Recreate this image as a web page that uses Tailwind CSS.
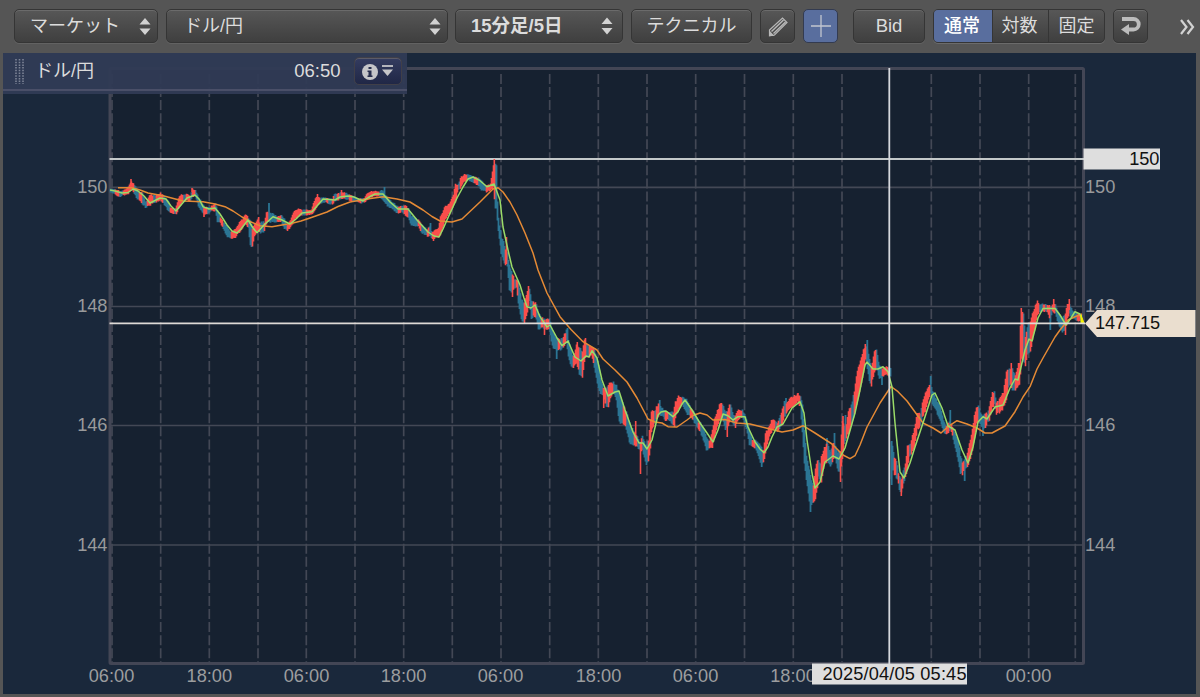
<!DOCTYPE html>
<html lang="ja">
<head>
  <meta charset="UTF-8">
  <meta name="viewport" content="width=device-width, initial-scale=1.0">
  <title>ドル/円 チャート</title>
  <script src="https://cdn.jsdelivr.net/npm/@tailwindcss/browser@4"></script>
</head>
<body class="w-[1200px] h-[697px] overflow-hidden bg-[#555555] font-['Liberation_Sans','Noto_Sans_CJK_JP',sans-serif] text-[#dcdcdc] flex flex-col">
  <!-- toolbar -->
  <header class="h-[53px] shrink-0 flex items-start pt-[9px] pl-[14px] text-[18px] leading-none whitespace-nowrap">
    <button class="w-[144px] h-[34px] rounded-[5px] border border-[#353535] bg-linear-to-b from-[#575757] to-[#3f3f3f] shadow-[inset_0_1px_0_#6b6b6b,0_1px_0_#626262] flex items-center justify-between pl-[15px] pr-[6px]">
      <span>マーケット</span>
      <svg class="w-[12px] h-[18px]" viewBox="0 0 12 18"><path d="M.5 7.500L6 1l5.500 6.500zM.5 11.500h11L6 18z" fill="#d2d2d2"/></svg>
    </button>
    <button class="ml-2 w-[282px] h-[34px] rounded-[5px] border border-[#353535] bg-linear-to-b from-[#575757] to-[#3f3f3f] shadow-[inset_0_1px_0_#6b6b6b,0_1px_0_#626262] flex items-center justify-between pl-[17px] pr-[6px]">
      <span>ドル/円</span>
      <svg class="w-[12px] h-[18px]" viewBox="0 0 12 18"><path d="M.5 7.500L6 1l5.500 6.500zM.5 11.500h11L6 18z" fill="#d2d2d2"/></svg>
    </button>
    <button class="ml-[7px] w-[168px] h-[34px] rounded-[5px] border border-[#353535] bg-linear-to-b from-[#575757] to-[#3f3f3f] shadow-[inset_0_1px_0_#6b6b6b,0_1px_0_#626262] flex items-center justify-between pl-[15px] pr-[9px] font-bold text-[18.5px]">
      <span>15分足/5日</span>
      <svg class="w-[12px] h-[18px]" viewBox="0 0 12 18"><path d="M.5 7L6 .5 11.500 7zM.5 11h11L6 17.500z" fill="#d2d2d2"/></svg>
    </button>
    <button class="ml-2 w-[121px] h-[34px] rounded-[5px] border border-[#353535] bg-linear-to-b from-[#575757] to-[#3f3f3f] shadow-[inset_0_1px_0_#6b6b6b,0_1px_0_#626262]">テクニカル</button>
    <button class="ml-2 w-[35px] h-[34px] rounded-[5px] border border-[#353535] bg-linear-to-b from-[#575757] to-[#3f3f3f] shadow-[inset_0_1px_0_#6b6b6b,0_1px_0_#626262] flex items-center justify-center">
      <svg class="w-[20px] h-[20px] mt-[2px]" viewBox="0 0 20 20" fill="none" stroke="#b8b8b8">
        <path d="M1.500 13L14.500 1l4.500 4.500L6.500 18l-5 .7z" stroke-width="1.200"/>
        <path d="M3.500 14.500L15.500 3M5.500 16.500L17.500 5" stroke-width="1.500"/>
        <path d="M1 13v6h5.500z" fill="#b8b8b8" stroke="none"/>
      </svg>
    </button>
    <button class="ml-2 w-[35px] h-[34px] rounded-[5px] border border-[#333b50] bg-[#596e9e] flex items-center justify-center">
      <svg class="w-[20px] h-[22px]" viewBox="0 0 20 22"><path d="M0 11h20M10 0v22" stroke="#c2c6d0" stroke-width="1.300"/></svg>
    </button>
    <button class="ml-[15px] w-[72px] h-[34px] rounded-[5px] border border-[#353535] bg-linear-to-b from-[#575757] to-[#3f3f3f] shadow-[inset_0_1px_0_#6b6b6b,0_1px_0_#626262] text-[18.5px]">Bid</button>
    <div class="ml-2 w-[172px] h-[34px] rounded-[5px] border border-[#353535] bg-linear-to-b from-[#575757] to-[#3f3f3f] shadow-[0_1px_0_#6b6b6b] flex overflow-hidden">
      <button class="w-[58px] bg-[#596e9e] text-white font-medium pr-[2px]">通常</button>
      <button class="w-[56px] border-l border-[#353535] pr-[2px]">対数</button>
      <button class="flex-1 border-l border-[#353535]">固定</button>
    </div>
    <button class="ml-2 w-[35px] h-[34px] rounded-[5px] border border-[#353535] bg-linear-to-b from-[#575757] to-[#3f3f3f] shadow-[inset_0_1px_0_#6b6b6b,0_1px_0_#626262] flex items-center justify-center">
      <svg class="w-[20px] h-[20px]" viewBox="0 0 20 20"><path d="M1 3h11.500a5 5 0 0 1 0 10.500H7" fill="none" stroke="#bcbcbc" stroke-width="3.800"/><path d="M8 8v11L0 13.500z" fill="#bcbcbc"/></svg>
    </button>
    <svg class="ml-[32px] mt-[10px] w-[15px] h-[16px]" viewBox="0 0 15 16"><path d="M1 1l5.500 7L1 15M7.500 1L13 8l-5.500 7" fill="none" stroke="#d2d2d2" stroke-width="2.200"/></svg>
  </header>

  <main class="relative ml-[3px] w-[1192.5px] h-[641px] bg-[#1a283b]">
    <!-- the view box keeps window coordinates -->
    <svg class="block w-[1193px] h-[641px]" viewBox="3 53 1193 641" font-size="18.200">
      <rect x="110" y="68.500" width="973.500" height="595" fill="#162130"/>
      <g id="grid" stroke="#434855" stroke-width="1.700"></g>
      <rect x="110" y="68.500" width="973.500" height="595" rx="1" fill="none" stroke="#434655" stroke-width="3"/>
      <path d="M109.500 159H1084" stroke="#c3c8c9" stroke-width="1.800"/>
      <g id="candles"></g>
      <g fill="none" stroke-width="1.500" stroke-linejoin="round">
        <polyline stroke="#e58a35" points="118,187.700 132,187.700 140,190 148,193 163,195.700 183,201 203,201.700 215,204 225,206.700 233,211 242,217 251,222 260,225.700 272,226.700 282,225 293,223 301,221 310,218 327,212 338,206.500 350,202 367,199 383,196.700 397,199 410,202 423,210 432,216.500 440,221 452,222 462,219 480,202 493,189 498,187.700 503,192 510,202 517,215 525,233 533,253 538,270 547,293 560,316.700 571,329.500 583,341.700 597,350 603,359 615,370 627,382 637,398 648,419 655,422 662,423 668,426.700 677,427 687,420 693,415.500 700,413 707,415 713,420 725,419.500 737,423 750,424 770,429 782,432 793,430 803,425.700 815,433 832,444 843,455 850,458.700 855,455.700 860,445 867,427 880,403 891,386.500 898,391.700 907,401 923,423 933,428 941,433 948,426.700 957,420.700 967,424 977,428 985,433 992,433 1005,426 1015,411.700 1023,397 1030,386.700 1037,369 1043,358 1055,337 1060,330 1068,320 1075,316.700 1082,314"/>
        <polyline stroke="#9bdc68" points="110,190 115,191 122,193 128,192.500 133,189 138,191 144,196 150,203 160,198 166,199 171,206 176,211 181,205 187,198 195,195 199,199 203,206.700 209,209 215,208 220,214 227,225 232,231 237,233 241,229 248,220 253,228 257,232.700 264,225 273,216.700 282,220 290,224 296,219 302,213 312,211.700 317,206 323,199 335,200 340,197 348,196 354,197 363,201 369,197 375,194 383,194 390,202 398,209 408,209 417,220 428,232 434,236 439,237 443,229 447,220 452,209 457,198 463,187 468,179 473,177 480,180.700 487,186.700 494,184 497,192 500,200 503,227 508,250 512,267 520,285 524,298 527,306.700 531,308 535,305 540,316.700 547,327 550,325 557,338 562,345.700 568,341 575,357 581,361 586,356 589,357 592,350.700 597,358 602,380 608,396 615,392 619,391 625,410 633,432 639,443 643,443 647,449 652,440 658,415 661,412 666,411 673,416.700 678,411.700 682,404 685,400 692,410 700,423 707,433 713,442 718,430 723,414 728,415.700 733,420 738,416.700 745,416.700 748,427 755,442 760,449 764,452.700 768,447 772,437 777,427 783,424 792,408 800,401.700 804,413 807,440 812,473 815,488 820,482 825,462 833,456 839,459 845,448 855,413 860,390 865,365 867,362 873,369 878,369 883,366.700 888,371.700 892,387 895,423 900,472 904,478 910,463 915,447 923,423 932,395 935,393 942,408 948,426 955,430 962,450 968,463 973,447 978,422 983,416.700 987,419 995,407 1003,405 1010,388 1015,379 1018,380 1025,350 1029,339 1032,341 1038,318 1043,308.500 1055,308.500 1060,315 1066,325 1071,318 1075,311.700 1080,314 1082,320"/>
      </g>
      <path d="M1081 315l3 8h-3z" fill="#f4f000" stroke="#f4f000"/>
      <path d="M109.500 323.300H1085" stroke="#dedad6" stroke-width="1.700"/>
      <path d="M889.300 68V664" stroke="#d5d8dd" stroke-width="1.800"/>
      <g fill="#999a9b">
        <text x="107.500" y="193" text-anchor="end">150</text>
        <text x="107.500" y="312.200" text-anchor="end">148</text>
        <text x="107.500" y="431.200" text-anchor="end">146</text>
        <text x="107.500" y="550.700" text-anchor="end">144</text>
        <text x="1085" y="193">150</text>
        <text x="1085" y="312.200">148</text>
        <text x="1085" y="431.200">146</text>
        <text x="1085" y="550.700">144</text>
      </g>
      <g id="hours" fill="#9c9d9f" text-anchor="middle"></g>
      <rect x="1083.500" y="148.500" width="76.500" height="21" fill="#dedede"/>
      <text x="1159.500" y="165" text-anchor="end" fill="#111">150</text>
      <path d="M1085 323.500L1097 310h98.500v27H1097z" fill="#eadecf"/>
      <text x="1095" y="329.300" fill="#111" textLength="65" lengthAdjust="spacing">147.715</text>
      <rect x="812" y="663.500" width="155" height="21" fill="#dedede"/>
      <text x="822.500" y="680.300" fill="#111" textLength="144" lengthAdjust="spacing">2025/04/05 05:45</text>
    </svg>

    <!-- instrument header over the chart -->
    <div class="absolute left-0 top-0 w-[403.5px] h-[41px] bg-[#303b55]/95 text-[18px] leading-none">
      <div class="h-[36px] flex items-center pl-[12px] pr-[5px]">
        <svg class="w-[9px] h-[25px]" viewBox="0 0 9 25"><path d="M1 0v25M4.500 0v25M8 0v25" stroke="#7d8496" stroke-width="1.600" stroke-dasharray="1.500 1.200"/></svg>
        <span class="ml-[11px]">ドル/円</span>
        <span class="ml-auto mr-[13px] text-[18.5px]">06:50</span>
        <button class="w-[48px] h-[28px] rounded-[5px] border border-[#403f48] bg-linear-to-b from-[#343c60] to-[#202746] shadow-[inset_0_1px_0_#5b5b68] flex items-center justify-center gap-[4px]">
          <svg class="w-[16px] h-[16px] mt-px" viewBox="0 0 16 16"><circle cx="8" cy="8" r="8" fill="#c5c5c8"/><path d="M6.500 3h3v2h-3zM5.500 6.500h4v5h1V13h-5v-1.500h1V8h-1z" fill="#262d4c"/></svg>
          <svg class="w-[11px] h-[12px]" viewBox="0 0 11 12"><path d="M0 1h11" stroke="#c5c5c8" stroke-width="1.800"/><path d="M0 4.500h11L5.500 11z" fill="#c5c5c8"/></svg>
        </button>
      </div>
      <div class="h-[2px] bg-[#4a4f68]"></div>
    </div>
  </main>

  <script>
    const NS = 'http://www.w3.org/2000/svg';

    function addPath(parent, d, attrs) {
      const p = document.createElementNS(NS, 'path');
      p.setAttribute('d', d);
      for (const k in attrs) p.setAttribute(k, attrs[k]);
      parent.appendChild(p);
    }

    // grid
    const grid = document.getElementById('grid');
    const columns = [112, 160.7, 209.3, 258, 306.3, 355, 403.7, 452.3, 501, 549.7, 598.3, 647, 695.7, 744.5, 793.3, 842, 931.3, 980, 1028.7, 1075.3];
    columns.forEach(x => addPath(grid, `M${x} 74V662`, { 'stroke-dasharray': '10 3.05' }));
    [187.3, 306.5, 425.5, 545].forEach(y => addPath(grid, `M110 ${y}H1083`, {}));

    const hours = document.getElementById('hours');
    [[111.5, '06:00'], [209.3, '18:00'], [306.5, '06:00'], [403.5, '18:00'], [500.5, '06:00'], [598.5, '18:00'], [695.5, '06:00'], [793, '18:00'], [1028.5, '00:00']].forEach(([x, label]) => {
      const t = document.createElementNS(NS, 'text');
      t.setAttribute('x', x);
      t.setAttribute('y', 681.7);
      t.textContent = label;
      hours.appendChild(t);
    });

    // x, high, low, r = up / b = down
    const bars = `110,189,192,b 115,190,194,r 119,191,197,b 123,191,195,r 128,187,194,r 131,181,189,r 134,185,194,b 137,189,200,b 139,192,200,r 142,192,204,b 145,202,208,b 147,199,206,r 150,194,205,r 153,195,203,b 156,195,202,r 160,193,200,r 163,196,204,b 168,201,211,b 170,207,213,r 174,210,214,b 176,206,214,r 179,195,207,r 183,194,202,b 186,194,200,r 190,196,201,b 192,189,197,r 195,190,196,b 198,197,206,b 202,203,213,b 204,208,214,r 207,207,214,b 211,206,210,r 215,204,211,b 217,210,222,b 220,217,223,r 223,222,229,b 227,227,237,b 231,232,239,r 235,228,238,r 240,220,231,r 245,215,223,r 248,217,229,b 250,219,246,b 252,228,247,r 254,225,236,r 257,219,232,r 260,222,233,b 264,222,232,r 266,212,224,r 268,212,222,b 273,214,222,b 277,217,222,r 281,215,222,b 284,219,229,b 287,225,231,r 291,218,226,r 294,210,220,r 298,209,216,r 302,210,216,b 306,210,215,r
    311,210,214,r 314,200,212,r 317,196,205,r 320,198,203,b 326,198,202,r 328,198,204,b 332,199,204,r 334,194,202,b 337,193,201,r 339,193,199,b 342,192,199,r 345,193,199,b 349,195,200,r 352,196,201,b 358,199,202,r 361,199,203,b 364,198,202,r 367,193,200,r 373,191,196,r 379,192,196,b 382,190,200,b 387,198,206,b 393,203,210,b 398,207,214,r 401,206,212,b 404,205,214,r 408,208,219,b 411,216,226,b 418,220,226,r 421,224,233,b 427,229,236,r 429,227,236,b 432,232,239,r 438,228,237,r 440,216,235,r 445,206,220,r 449,203,214,r 453,194,206,r 455,183,202,r 458,184,190,b 460,178,188,r 464,173,182,r 467,174,180,b 474,177,183,r 478,178,186,b 481,181,190,b 486,186,192,r 490,184,190,r 493,165,188,r 495,164,210,b 497,200,222,b 498,218,231,b 501,237,255,b 503,240,262,b 505,250,265,r 507,252,266,b 509,265,291,b 512,274,294,r 514,279,288,b 516,280,287,r 518,283,305,b 521,298,320,b 524,303,325,r 527,290,313,r 529,289,302,b 531,300,320,b 533,302,316,r 536,303,320,b 538,312,330,b 541,317,328,r 543,318,329,b 546,319,331,r 549,318,330,b
    552,330,347,b 556,338,352,b 558,338,350,r 560,340,351,b 563,336,348,r 565,332,345,r 566,330,341,b 568,340,358,b 571,350,367,b 573,356,368,r 576,345,363,r 579,348,374,b 582,350,377,r 584,340,362,r 586,343,357,b 589,346,358,r 591,346,355,r 594,348,368,b 597,360,385,b 600,376,395,b 603,388,396,r 606,387,407,b 608,384,408,r 611,382,396,r 613,382,392,b 616,385,400,b 619,394,423,b 623,405,424,r 626,412,430,b 630,425,446,b 634,432,445,r 637,436,448,b 640,442,452,r 642,434,450,b 645,445,462,b 648,440,462,r 650,420,450,r 651,411,432,r 654,411,425,b 656,406,420,r 659,403,415,b 663,410,417,b 665,411,421,r 668,412,420,b 673,412,425,r 675,402,418,r 678,396,410,r 682,397,405,b 687,400,415,b 690,408,418,r 693,411,421,b 698,422,430,r 700,422,432,b 704,430,443,b 706,436,450,b 709,441,449,r 712,430,448,r 714,418,438,r 718,408,424,r 720,402,420,r 722,403,420,b 725,412,430,b 727,410,429,r 730,403,420,b 733,415,424,b 735,415,428,r 738,410,420,r 742,410,417,b 746,418,430,b 749,430,445,b 752,440,447,r 755,440,448,b 760,445,462,b 763,450,463,r 765,433,455,r 768,427,440,r 772,418,430,r 775,420,430,b 777,422,433,r 779,418,430,b 781,412,426,r 784,401,418,b 786,404,414,r 789,398,409,r 793,396,408,r 797,394,402,r 800,396,407,b 802,405,432,b 804,430,465,b 806,455,480,b 809,470,502,b 811,480,506,b 813,485,502,r 815,468,501,r 817,460,488,r 818,460,477,b 820,464,480,b 821,455,482,r 824,447,464,r 827,443,462,b 830,452,467,b 832,443,463,r 834,443,456,b 837,452,470,b 840,450,475,r 842,420,460,r 844,425,445,b 846,424,438,r 848,410,434,r 851,405,425,b 854,390,415,r 857,370,400,r 861,356,385,r
    863,350,372,r 865,345,360,r 866,345,362,b 869,358,382,b 871,366,386,r 874,351,372,r 876,350,368,b 879,365,380,b 882,368,377,r 886,366,374,r 888,367,376,b 891,442,480,b 892,445,467,b 894,458,475,r 896,460,478,b 898,472,484,r 899,475,491,b 901,478,494,r 903,470,484,b 905,463,478,r 907,446,470,r 909,445,456,b 911,440,456,r 914,427,446,r 917,412,430,r 920,414,426,b 922,403,417,r 925,392,412,r 928,386,400,r 930,384,393,b 932,390,405,b 936,399,412,b 940,405,421,b 943,420,432,b 946,426,435,r 949,420,431,b 951,424,432,r 953,429,440,b 958,440,462,b 960,455,474,b 962,462,475,r 964,458,470,b 967,453,468,r 970,438,460,r 972,428,450,r 974,415,438,r 976,406,425,r 978,406,422,b 982,416,429,b 985,412,428,r 987,414,422,b 989,406,420,r 992,392,408,r 994,391,405,b 996,403,414,r 998,400,412,b 999,397,415,r 1003,392,408,r 1006,370,400,r 1008,369,388,b 1010,368,386,r 1012,368,390,b 1015,375,392,r 1018,362,386,r 1020,325,375,r 1021,310,360,r 1023,313,362,b 1025,336,366,r 1027,326,355,b 1030,320,352,r 1033,310,335,r 1035,305,325,r 1037,301,315,r 1039,304,312,b 1043,304,312,r 1045,304,311,b 1047,305,312,r 1050,306,322,b 1052,304,311,r 1055,305,314,b 1058,312,325,b 1062,318,332,b 1065,312,332,r 1067,303,318,r 1069,303,315,b 1073,312,318,b 1077,314,321,r 1080,314,321,b 1082,316,321,b`
      .split(/\s+/).map(s => { const [x, hi, lo, c] = s.split(','); return [+x, +hi, +lo, c]; });

    // one candle per pixel, long wicks listed on their own
    let up = '', down = '', seed = 7;
    const rand = () => (seed = (seed * 1103515245 + 12345) % 2147483648) / 2147483648;
    for (let i = 0; i < bars.length - 1; i++) {
      const [x0, h0, l0, c] = bars[i];
      const [x1, h1, l1] = bars[i + 1];
      const jump = Math.abs(h1 - h0) > 30;
      for (let x = x0; x < x1; x++) {
        const t = jump ? 0 : (x - x0) / (x1 - x0);
        const j = Math.min(2.5, (l0 - h0) / 5);
        const hi = h0 + (h1 - h0) * t - 0.7 + rand() * j;
        const lo = l0 + (l1 - l0) * t + 0.7 - rand() * j;
        const d = `M${x + 0.5} ${hi.toFixed(1)}V${lo.toFixed(1)}`;
        if (c === 'r') up += d; else down += d;
      }
    }
    const wicks = [[131, 179, 188, 'r'], [192, 188, 192, 'r'], [204, 208, 217, 'r'], [258.7, 217, 230, 'r'], [269, 203, 220, 'b'], [317.5, 194, 205, 'r'], [341.5, 190, 199, 'r'], [384.5, 187, 200, 'b'], [430.5, 223, 236, 'b'], [433.5, 232, 241, 'r'], [494.3, 159, 186, 'r'], [506.5, 237, 255, 'r'], [512.5, 275, 297, 'r'], [528.5, 286, 300, 'r'], [544.5, 320, 335, 'r'], [556.7, 340, 359, 'b'], [567.5, 328, 340, 'b'], [577.3, 342, 362, 'r'], [585.5, 338, 355, 'r'], [603.7, 390, 408, 'r'], [635.7, 421, 440, 'r'], [640.5, 442, 474, 'r'], [646.5, 450, 465, 'b'], [659.7, 400, 410, 'b'], [674.5, 412, 427, 'r'], [727.3, 420, 437, 'r'], [761.7, 450, 467, 'b'], [786, 398, 410, 'b'], [798, 393, 400, 'r'], [810.5, 490, 512, 'b'], [827, 438, 450, 'b'], [834.5, 433, 445, 'b'], [840.5, 460, 482, 'r'], [843, 416, 430, 'r'], [845.5, 415, 430, 'b'], [865.3, 344, 355, 'r'], [867.3, 340, 355, 'b'], [882, 370, 385, 'b'], [891.7, 441, 485, 'b'], [901.3, 480, 496, 'r'], [930.7, 376, 388, 'b'], [950.3, 410, 425, 'b'], [964.7, 460, 481, 'b'], [983, 420, 436, 'b'], [1011.3, 363, 380, 'r'], [1021.3, 308, 330, 'r'], [1053.7, 299, 308, 'r'], [1050.3, 310, 330, 'b'], [1065.5, 320, 335, 'r'], [1069.3, 299, 310, 'r']];
    wicks.forEach(([x, hi, lo, c]) => { if (c === 'r') up += `M${x} ${hi}V${lo}`; else down += `M${x} ${hi}V${lo}`; });
    const candles = document.getElementById('candles');
    addPath(candles, down, { stroke: '#2b7594', 'stroke-width': 1.8 });
    addPath(candles, up, { stroke: '#fa4e4b', 'stroke-width': 1.6 });
  </script>
</body>
</html>
